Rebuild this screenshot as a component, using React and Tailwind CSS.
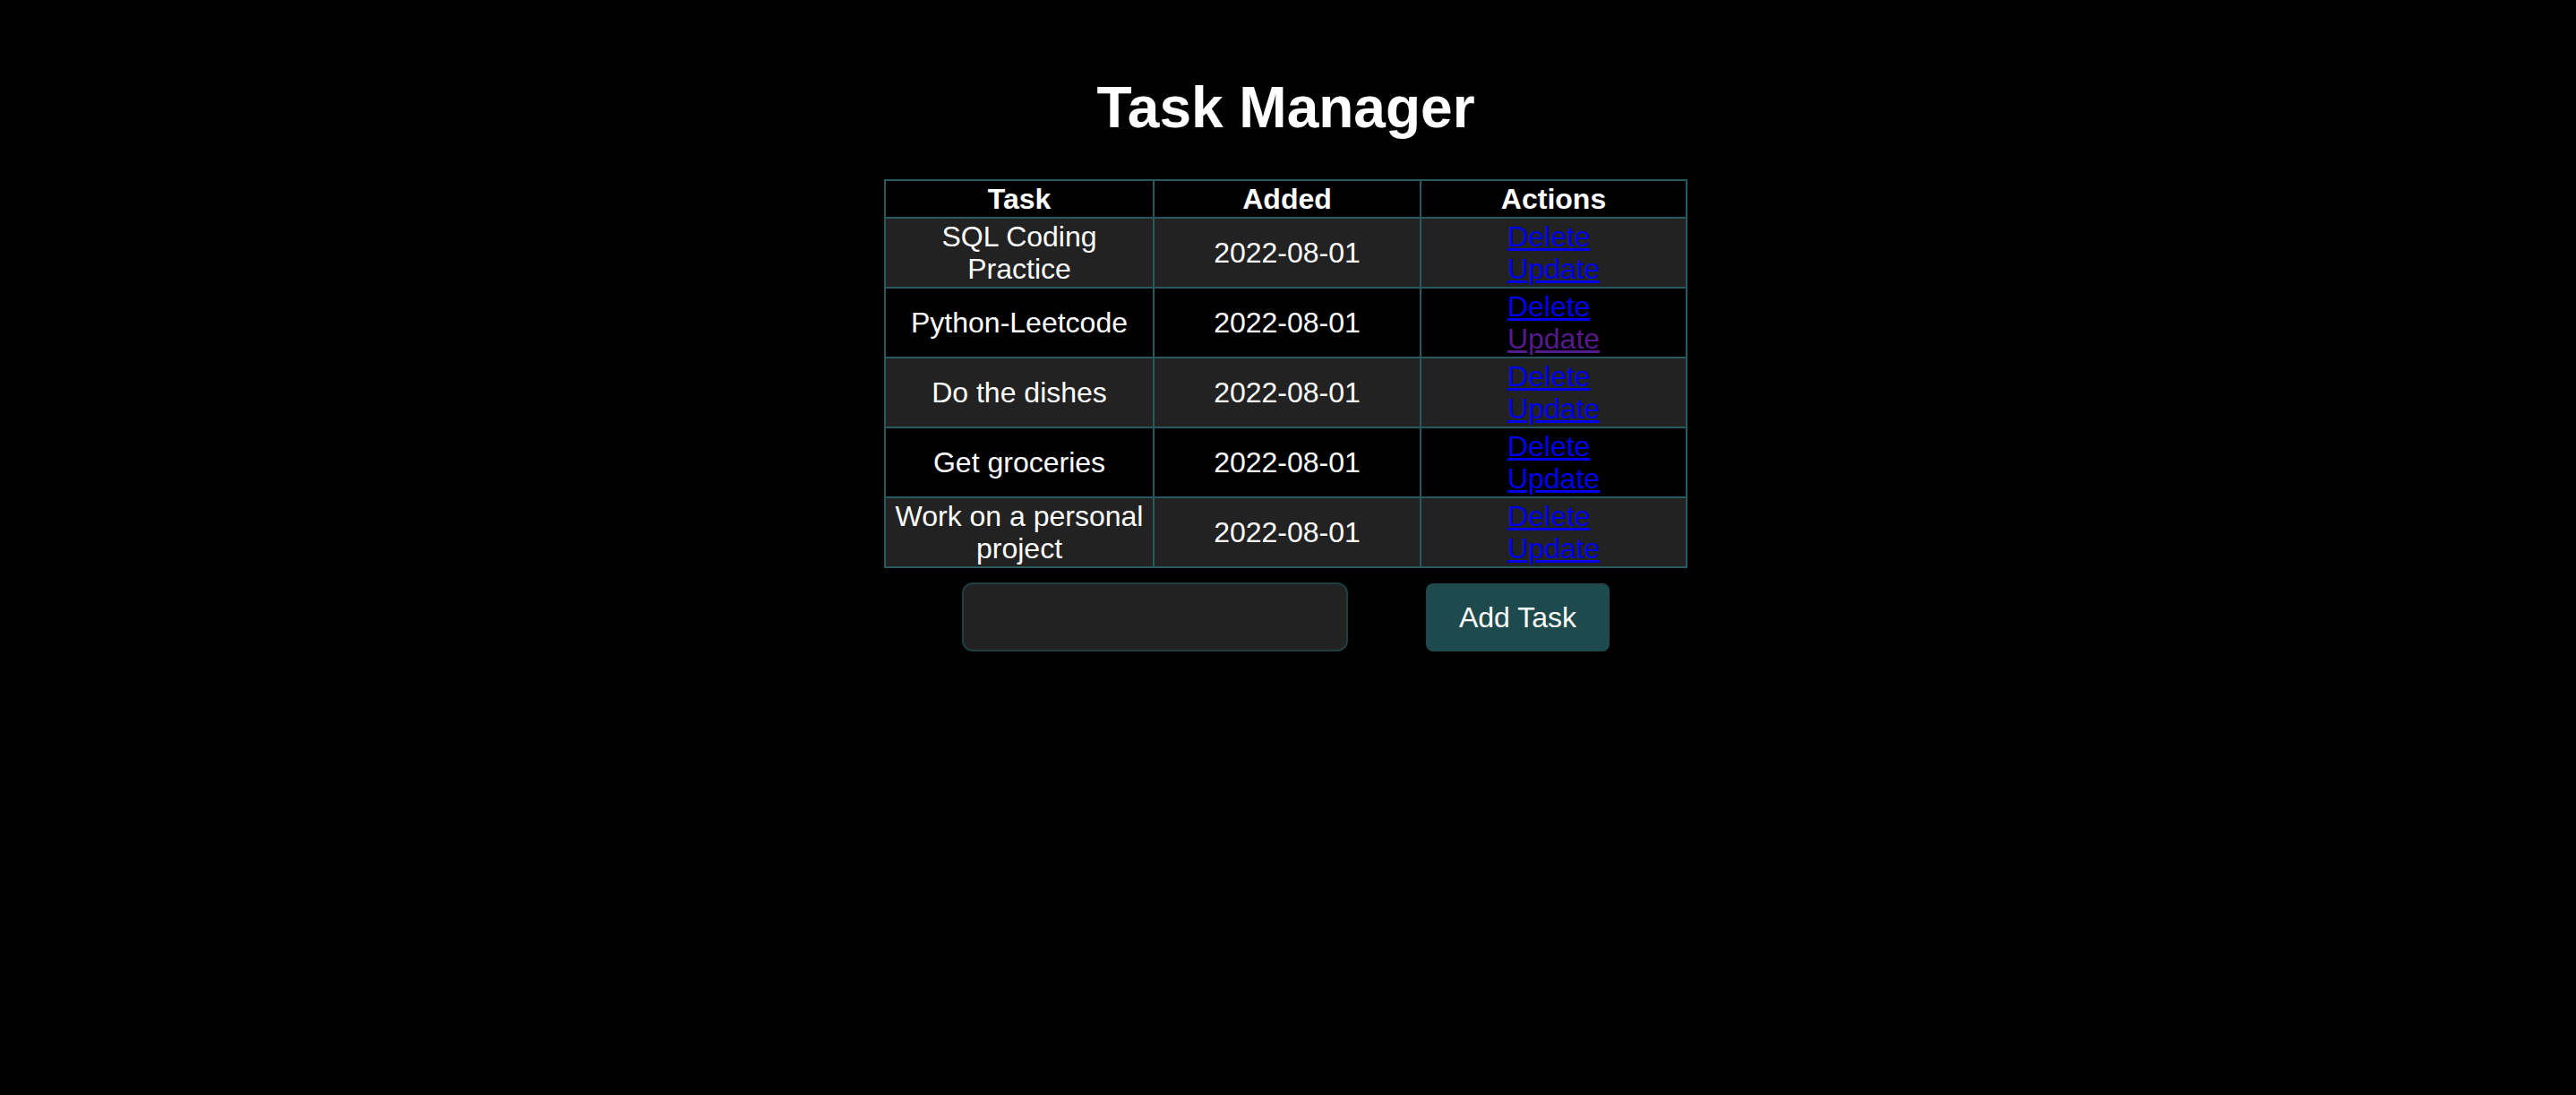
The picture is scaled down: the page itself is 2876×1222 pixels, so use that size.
import React from "react";

const rows = [
  { task: "SQL Coding Practice", date: "2022-08-01", visited: false },
  { task: "Python-Leetcode", date: "2022-08-01", visited: true },
  { task: "Do the dishes", date: "2022-08-01", visited: false },
  { task: "Get groceries", date: "2022-08-01", visited: false },
  { task: "Work on a personal project", date: "2022-08-01", visited: false },
];

export default function App() {
  return (
    <div className="min-h-screen w-full bg-black text-white font-['Liberation_Sans',Arial,Helvetica,sans-serif] flex flex-col items-center pt-[83px]">
      <h1 className="text-[64px] leading-[74px] font-bold mb-[43px] ml-[-5px]">Task Manager</h1>
      <table className="table-fixed w-[897px] border-collapse border-2 border-[#285a5d] text-[32px] leading-[36px] ml-[-5px]">
        <colgroup>
          <col className="w-[300px]" />
          <col className="w-[298px]" />
          <col />
        </colgroup>
        <thead>
          <tr className="bg-black">
            <th className="border-2 border-[#285a5d] py-[2px] px-[2px] font-bold text-center">Task</th>
            <th className="border-2 border-[#285a5d] py-[2px] px-[2px] font-bold text-center">Added</th>
            <th className="border-2 border-[#285a5d] py-[2px] px-[2px] font-bold text-center">Actions</th>
          </tr>
        </thead>
        <tbody>
          {rows.map((r, i) => (
            <tr key={i} className={i % 2 === 0 ? "bg-[#222222]" : "bg-black"}>
              <td className="border-2 border-[#285a5d] py-[2px] px-[2px] text-center align-middle">{r.task}</td>
              <td className="border-2 border-[#285a5d] py-[2px] px-[2px] text-center align-middle">{r.date}</td>
              <td className="border-2 border-[#285a5d] py-[2px] px-[2px] text-center align-middle">
                <div className="inline-flex flex-col items-start text-left">
                  <a href="#" className="text-[#0000ee] underline">Delete</a>
                  <a href="#" className={r.visited ? "text-[#551a8b] underline" : "text-[#0000ee] underline"}>Update</a>
                </div>
              </td>
            </tr>
          ))}
        </tbody>
      </table>
      <form className="w-[897px] flex justify-evenly items-center mt-[16px] ml-[-5px]" onSubmit={(e) => e.preventDefault()}>
        <input type="text" className="w-[431px] h-[77px] rounded-[12px] border-2 border-[#1f3f41] bg-[#222222] text-white text-[32px] px-3 outline-none" />
        <button type="submit" className="w-[205px] h-[76px] rounded-[8px] bg-[#1e4a4d] text-white text-[32px] leading-[36px]">Add Task</button>
      </form>
    </div>
  );
}
